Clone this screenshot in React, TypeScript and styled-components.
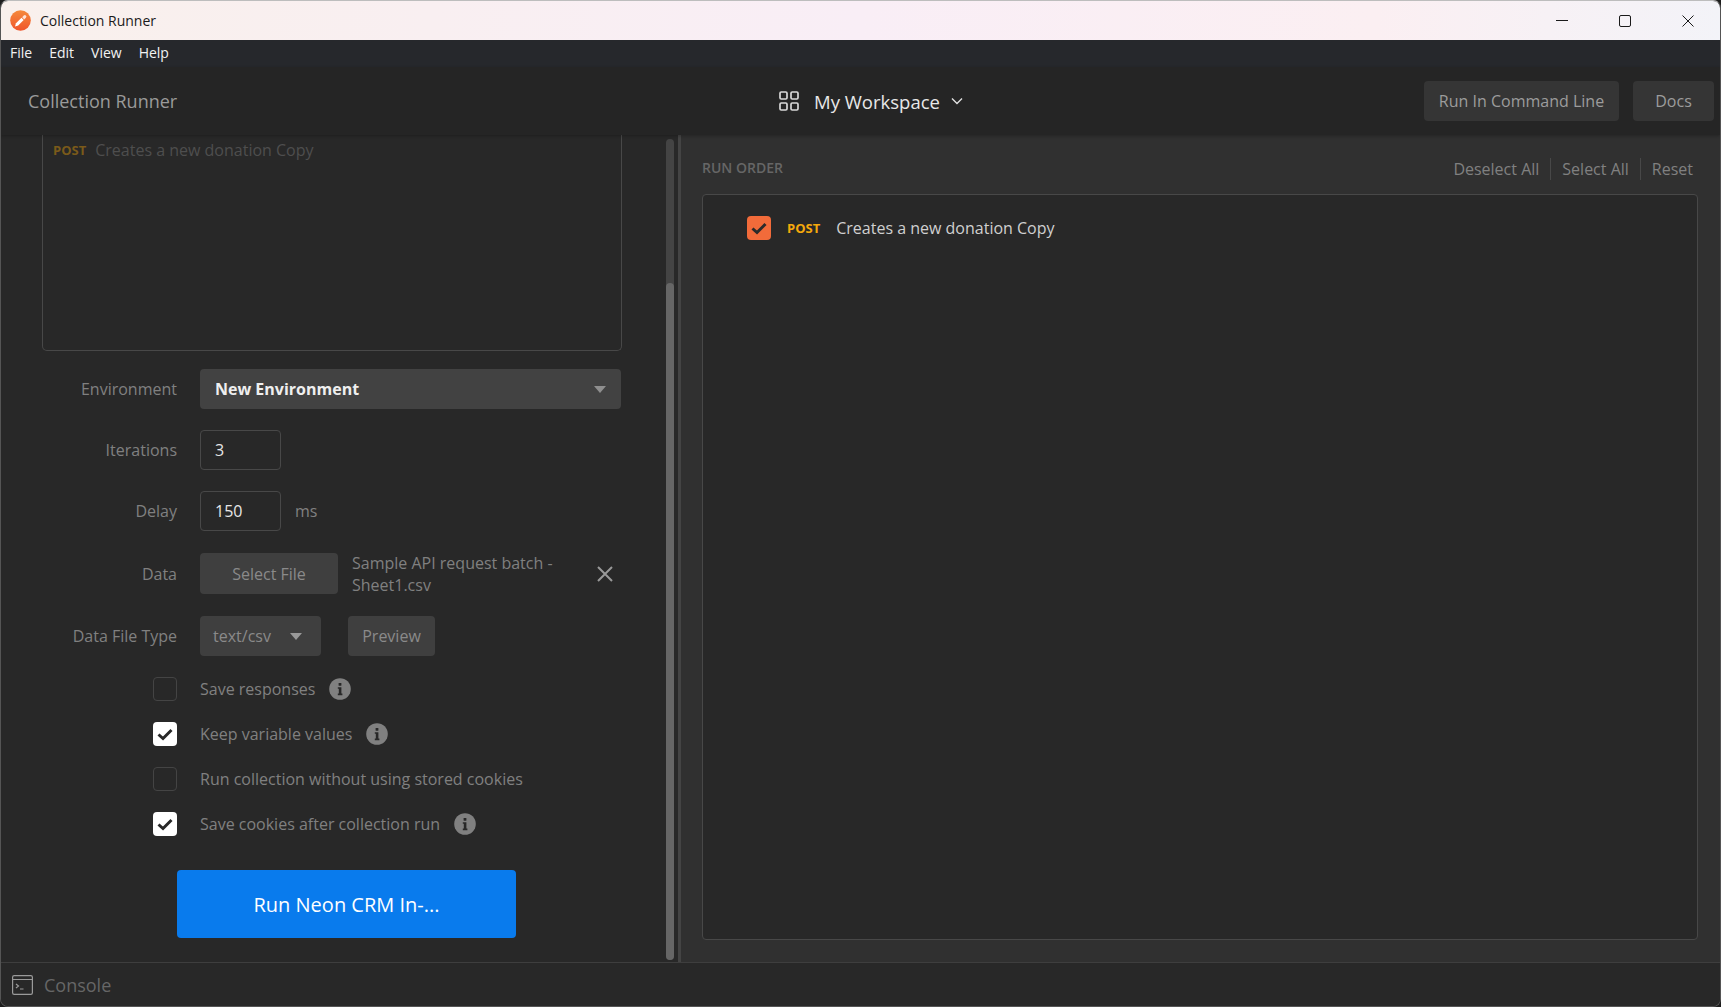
import React from "react";
import styled, { createGlobalStyle } from "styled-components";

const GlobalStyle = createGlobalStyle`
    html, body {
        margin: 0;
        height: 100%;
        background: #1d1d1d;
    }
    * {
        box-sizing: border-box;
    }
    body {
        font-family: "Open Sans", "Noto Sans", sans-serif;
        font-size: 16px;
    }
`;

const Logo = () => (
    <svg width="21" height="21" viewBox="0 0 21 21">
        <defs>
            <linearGradient id="logoFill" x1="0" y1="0" x2="0" y2="1">
                <stop offset="0" stopColor="#f58a3c" />
                <stop offset="1" stopColor="#f0552b" />
            </linearGradient>
        </defs>
        <circle cx="10.5" cy="10.5" r="10.3" fill="url(#logoFill)" />
        <path d="M5 16.5l1-3.2 5.5-5.5 2.2 2.2-5.5 5.5z" fill="#fff" />
        <path d="M12.2 7.2l1.5-1.6a1.5 1.5 0 0 1 2.2 2.2l-1.6 1.6z" fill="#fde3d6" />
    </svg>
);

const GridIcon = () => (
    <svg width="20" height="20" viewBox="0 0 20 20" fill="none" stroke="#d8d8d8" strokeWidth="1.7">
        <rect x="1" y="1" width="7" height="7" rx="1.2" />
        <rect x="12" y="1" width="7" height="7" rx="1.2" />
        <rect x="1" y="12" width="7" height="7" rx="1.2" />
        <rect x="12" y="12" width="7" height="7" rx="1.2" />
    </svg>
);

const Chevron = () => (
    <svg width="12" height="8" viewBox="0 0 12 8" fill="none" stroke="#e0e0e0" strokeWidth="1.4">
        <path d="M1 1.5l5 5 5-5" />
    </svg>
);

const ConsoleIcon = () => (
    <svg width="21" height="20" viewBox="0 0 21 20" fill="none" stroke="#9a9a9a" strokeWidth="1.2">
        <rect x="0.6" y="0.6" width="19.8" height="18.8" rx="1.6" />
        <path d="M1 4.5h19" />
        <path d="M4 9l2.5 2L4 13" />
        <path d="M8 14h3.5" />
    </svg>
);

const CheckMark = ({ color }: { color: string }) => (
    <svg width="24" height="24" viewBox="0 0 24 24" fill="none" stroke={color} strokeWidth="3">
        <path d="M5.5 12.5l4.5 4 8.5-8.5" />
    </svg>
);

const InfoIcon = () => (
    <svg width="22" height="22" viewBox="0 0 22 22">
        <circle cx="11" cy="11" r="10.8" fill="#808080" />
        <rect x="9.6" y="5" width="2.8" height="2.8" rx="0.6" fill="#282828" />
        <path d="M8.8 9.2h3.6v6.4h1v1.6H8.8v-1.6h1v-4.8h-1z" fill="#282828" />
    </svg>
);

const Caret = ({ color }: { color: string }) => (
    <svg width="12" height="7" viewBox="0 0 12 7">
        <path d="M0 0h12L6 7z" fill={color} />
    </svg>
);

const WindowGlyph = ({ kind }: { kind: "min" | "max" | "close" }) => (
    <svg width="12" height="12" viewBox="0 0 12 12" fill="none" stroke="#1a1a1a" strokeWidth="1">
        {kind === "min" && <path d="M0 5.5h12" />}
        {kind === "max" && <rect x="0.5" y="0.5" width="11" height="11" rx="1.5" />}
        {kind === "close" && <path d="M0.5 0.5l11 11M11.5 0.5l-11 11" />}
    </svg>
);

const App = () => {
    return (
        <Frame>
            <GlobalStyle />
            <TitleBar>
                <Logo />
                <TitleText>Collection Runner</TitleText>
                <WindowControls>
                    <WindowButton><WindowGlyph kind="min" /></WindowButton>
                    <WindowButton><WindowGlyph kind="max" /></WindowButton>
                    <WindowButton><WindowGlyph kind="close" /></WindowButton>
                </WindowControls>
            </TitleBar>
            <MenuBar>
                <span>File</span>
                <span>Edit</span>
                <span>View</span>
                <span>Help</span>
            </MenuBar>
            <Header>
                <HeaderTitle>Collection Runner</HeaderTitle>
                <Workspace>
                    <GridIcon />
                    <WorkspaceName>My Workspace</WorkspaceName>
                    <Chevron />
                </Workspace>
                <HeaderActions>
                    <HeaderButton $width={195}>Run In Command Line</HeaderButton>
                    <HeaderButton $width={81}>Docs</HeaderButton>
                </HeaderActions>
            </Header>
            <Main>
                <LeftPane>
                    <FormColumn>
                        <RequestList>
                            <MethodTag $dim>POST</MethodTag>
                            <DimRequestName>Creates a new donation Copy</DimRequestName>
                        </RequestList>
                        <Row $top={18}>
                            <Label>Environment</Label>
                            <EnvSelect>
                                New Environment
                                <Caret color="#8f8f8f" />
                            </EnvSelect>
                        </Row>
                        <Row>
                            <Label>Iterations</Label>
                            <NumberBox>3</NumberBox>
                        </Row>
                        <Row>
                            <Label>Delay</Label>
                            <NumberBox>150</NumberBox>
                            <Unit>ms</Unit>
                        </Row>
                        <Row $top={22} $height={41}>
                            <Label>Data</Label>
                            <SelectFile>Select File</SelectFile>
                            <FileName>Sample API request batch - Sheet1.csv</FileName>
                            <ClearFile>
                                <svg width="16" height="16" viewBox="0 0 16 16" fill="none" stroke="#999" strokeWidth="2">
                                    <path d="M1 1l14 14M15 1L1 15" />
                                </svg>
                            </ClearFile>
                        </Row>
                        <Row $top={22}>
                            <Label>Data File Type</Label>
                            <TypeSelect>
                                text/csv
                                <Caret color="#999" />
                            </TypeSelect>
                            <PreviewButton>Preview</PreviewButton>
                        </Row>
                        <Options>
                            <Option>
                                <CheckBox />
                                <OptionText>Save responses</OptionText>
                                <InfoIcon />
                            </Option>
                            <Option>
                                <CheckBox $checked><CheckMark color="#282828" /></CheckBox>
                                <OptionText>Keep variable values</OptionText>
                                <InfoIcon />
                            </Option>
                            <Option>
                                <CheckBox />
                                <OptionText>Run collection without using stored cookies</OptionText>
                            </Option>
                            <Option>
                                <CheckBox $checked><CheckMark color="#282828" /></CheckBox>
                                <OptionText>Save cookies after collection run</OptionText>
                                <InfoIcon />
                            </Option>
                        </Options>
                        <RunButton>Run Neon CRM In-...</RunButton>
                    </FormColumn>
                    <ScrollTrack>
                        <ScrollThumb />
                    </ScrollTrack>
                </LeftPane>
                <RightPane>
                    <RunHeader>
                        <RunTitle>RUN ORDER</RunTitle>
                        <RunActions>
                            <RunAction>Deselect All</RunAction>
                            <RunAction>Select All</RunAction>
                            <RunAction>Reset</RunAction>
                        </RunActions>
                    </RunHeader>
                    <RunBox>
                        <RunRow>
                            <OrangeCheck><CheckMark color="#2b2b2b" /></OrangeCheck>
                            <MethodTag>POST</MethodTag>
                            <RequestName>Creates a new donation Copy</RequestName>
                        </RunRow>
                    </RunBox>
                </RightPane>
            </Main>
            <ConsoleBar>
                <ConsoleIcon />
                <span>Console</span>
            </ConsoleBar>
        </Frame>
    );
};

const Frame = styled.div`
    width: 100%;
    height: 100vh;
    display: flex;
    flex-direction: column;
    overflow: hidden;
    border-radius: 8px;
    border: 1px solid #555;
    border-top-color: #bdbdbd;
    background: #282828;
`;

const TitleBar = styled.div`
    height: 39px;
    flex-shrink: 0;
    display: flex;
    align-items: center;
    padding-left: 9px;
    background: linear-gradient(90deg, #f9f0ec 0%, #f9eef6 50%, #fbeff2 80%, #f3f3f8 100%);
`;

const TitleText = styled.div`
    margin-left: 9px;
    font-family: "Open Sans", sans-serif;
    font-size: 14px;
    color: #1a1a1a;
`;

const WindowControls = styled.div`
    margin-left: auto;
    display: flex;
    padding-right: 26px;
    gap: 51px;
`;

const WindowButton = styled.div`
    width: 12px;
    height: 12px;
    display: flex;
`;

const MenuBar = styled.div`
    height: 27px;
    flex-shrink: 0;
    display: flex;
    align-items: center;
    gap: 17px;
    padding: 0 0 2px 9px;
    background: #26282c;
    color: #f2f2f2;
    font-size: 14px;
`;

const Header = styled.div`
    height: 68px;
    flex-shrink: 0;
    display: grid;
    grid-template-columns: 1fr auto 1fr;
    align-items: center;
    padding: 0 6px 0 27px;
    background: #252525;
    box-shadow: 0 1px 3px rgba(0, 0, 0, 0.25);
    position: relative;
    z-index: 1;
`;

const HeaderTitle = styled.div`
    font-size: 18px;
    color: #9a9a9a;
`;

const Workspace = styled.div`
    display: flex;
    align-items: center;
    color: #e8e8e8;
`;

const WorkspaceName = styled.div`
    margin: 0 11px 0 15px;
    font-size: 18.5px;
    font-weight: 500;
`;

const HeaderActions = styled.div`
    display: flex;
    justify-content: flex-end;
    gap: 14px;
`;

const HeaderButton = styled.div<{ $width: number }>`
    width: ${(p) => p.$width}px;
    height: 40px;
    display: flex;
    align-items: center;
    justify-content: center;
    border-radius: 4px;
    background: #353535;
    color: #9c9c9c;
    font-size: 16px;
`;

const Main = styled.div`
    flex: 1;
    min-height: 0;
    display: flex;
`;

const LeftPane = styled.div`
    width: 680px;
    flex-shrink: 0;
    display: flex;
    background: #282828;
    border-right: 3px solid #444;
`;

const FormColumn = styled.div`
    width: 665px;
    flex-shrink: 0;
`;

const RequestList = styled.div`
    height: 216px;
    margin-left: 41px;
    width: 580px;
    padding-top: 4px;
    display: flex;
    align-items: flex-start;
    gap: 9px;
    line-height: 22px;
    border: 1px solid #484848;
    border-top: 0;
    border-radius: 0 0 5px 5px;
    padding-left: 10px;
`;

const MethodTag = styled.span<{ $dim?: boolean }>`
    font-size: 13px;
    font-weight: 700;
    color: ${(p) => (p.$dim ? "#7a5a1a" : "#f4a90c")};
`;

const DimRequestName = styled.span`
    font-size: 16px;
    color: #4e4e4e;
`;

const Row = styled.div<{ $top?: number; $height?: number }>`
    display: flex;
    align-items: center;
    height: ${(p) => p.$height ?? 40}px;
    margin-top: ${(p) => p.$top ?? 21}px;
`;

const Label = styled.div`
    width: 176px;
    margin-right: 23px;
    flex-shrink: 0;
    text-align: right;
    font-size: 16px;
    color: #808080;
`;

const EnvSelect = styled.div`
    width: 421px;
    height: 100%;
    display: flex;
    align-items: center;
    justify-content: space-between;
    padding: 0 15px;
    border-radius: 4px;
    background: #424242;
    color: #efefef;
    font-size: 16px;
    font-weight: 700;
`;

const NumberBox = styled.div`
    width: 81px;
    height: 100%;
    display: flex;
    align-items: center;
    padding-left: 14px;
    border: 1px solid #484848;
    border-radius: 4px;
    color: #e6e6e6;
    font-size: 16px;
`;

const Unit = styled.span`
    margin-left: 14px;
    color: #808080;
    font-size: 16px;
`;

const SelectFile = styled.div`
    width: 138px;
    height: 100%;
    flex-shrink: 0;
    display: flex;
    align-items: center;
    justify-content: center;
    border-radius: 4px;
    background: #3f3f3f;
    color: #8a8a8a;
    font-size: 16px;
`;

const FileName = styled.div`
    width: 222px;
    margin-left: 14px;
    color: #808080;
    font-size: 16px;
    line-height: 22px;
`;

const ClearFile = styled.div`
    margin-left: 23px;
    display: flex;
`;

const TypeSelect = styled.div`
    width: 121px;
    height: 100%;
    display: flex;
    align-items: center;
    justify-content: space-between;
    padding: 0 19px 0 13px;
    border-radius: 4px;
    background: #3f3f3f;
    color: #8a8a8a;
    font-size: 16px;
`;

const PreviewButton = styled.div`
    width: 87px;
    height: 100%;
    margin-left: 27px;
    display: flex;
    align-items: center;
    justify-content: center;
    border-radius: 4px;
    background: #3f3f3f;
    color: #8a8a8a;
    font-size: 16px;
`;

const Options = styled.div`
    margin-top: 21px;
    padding-left: 152px;
    display: flex;
    flex-direction: column;
    gap: 21px;
`;

const Option = styled.div`
    height: 24px;
    display: flex;
    align-items: center;
`;

const CheckBox = styled.div<{ $checked?: boolean }>`
    width: 24px;
    height: 24px;
    flex-shrink: 0;
    margin-right: 23px;
    border-radius: 4px;
    border: ${(p) => (p.$checked ? "0" : "1px solid #444")};
    background: ${(p) => (p.$checked ? "#fff" : "transparent")};
`;

const OptionText = styled.span`
    margin-right: 14px;
    color: #808080;
    font-size: 16px;
`;

const RunButton = styled.div`
    width: 339px;
    height: 68px;
    margin: 34px 0 0 176px;
    display: flex;
    align-items: center;
    justify-content: center;
    border-radius: 4px;
    background: #097bed;
    color: #fff;
    font-size: 20px;
`;

const ScrollTrack = styled.div`
    width: 8px;
    height: 821px;
    margin-top: 4px;
    border-radius: 4px;
    background: #444;
    padding-top: 144px;
    display: flex;
`;

const ScrollThumb = styled.div`
    flex: 1;
    border-radius: 4px;
    background: #666;
`;

const RightPane = styled.div`
    flex: 1;
    display: flex;
    flex-direction: column;
    padding: 0 22px 22px 21px;
    background: #303030;
`;

const RunHeader = styled.div`
    height: 59px;
    flex-shrink: 0;
    display: flex;
    align-items: center;
    justify-content: space-between;
    padding-top: 8px;
`;

const RunTitle = styled.div`
    font-size: 14px;
    font-weight: 600;
    color: #666;
    padding-bottom: 3px;
`;

const RunActions = styled.div`
    display: flex;
    padding-right: 5px;
`;

const RunAction = styled.div`
    padding: 0 11px;
    line-height: 22px;
    font-size: 16px;
    color: #808080;
    border-right: 1px solid #484848;
    &:last-child {
        border-right: 0;
        padding-right: 0;
    }
`;

const RunBox = styled.div`
    flex: 1;
    border: 1px solid #484848;
    border-radius: 4px;
    background: #282828;
    padding: 21px 0 0 44px;
`;

const RunRow = styled.div`
    display: flex;
    align-items: center;
    height: 24px;
`;

const OrangeCheck = styled.div`
    width: 24px;
    height: 24px;
    margin-right: 16px;
    border-radius: 4px;
    background: #f26b3a;
`;

const RequestName = styled.span`
    margin-left: 16px;
    font-size: 16px;
    color: #d0d0d0;
`;

const ConsoleBar = styled.div`
    height: 44px;
    flex-shrink: 0;
    display: flex;
    align-items: center;
    gap: 11px;
    padding-left: 11px;
    border-top: 1px solid #3e3e3e;
    background: #282828;
    color: #666;
    font-size: 18px;
`;

export default App;
